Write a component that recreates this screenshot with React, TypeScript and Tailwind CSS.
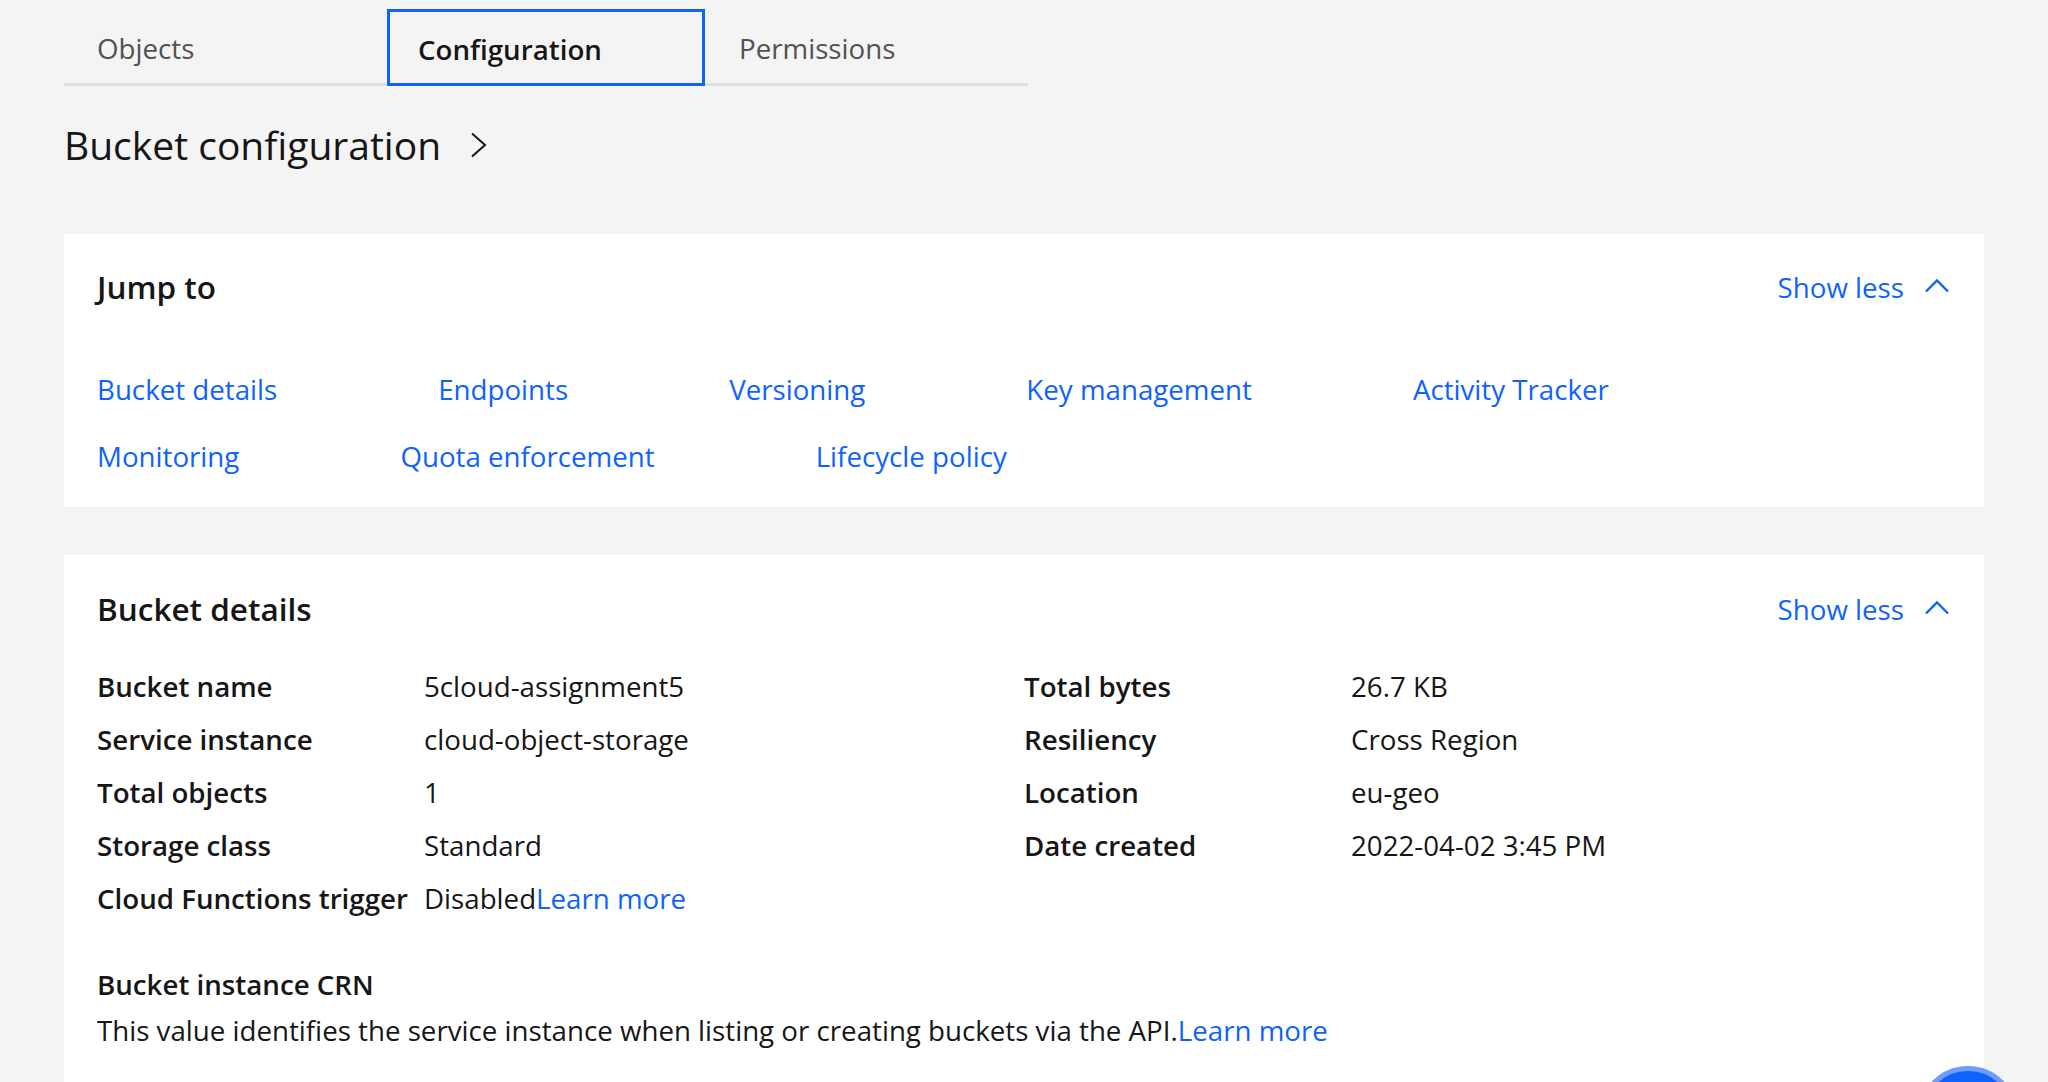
import React from "react";

const ChevronUp = () => (
  <svg width="28" height="28" viewBox="0 0 28 28" fill="none">
    <polyline points="3,19.5 14,8.5 25,19.5" stroke="#0f62fe" strokeWidth="2.4" fill="none" />
  </svg>
);

const ShowLess = () => (
  <div className="flex items-center gap-[19px] text-[27.7px] text-[#0f62fe] leading-[40px]">
    <span className="pt-[2px]">Show less</span>
    <ChevronUp />
  </div>
);

const Row = ({ label, children }: { label: string; children: React.ReactNode }) => (
  <div className="grid grid-cols-[327px_1fr] h-[53px] items-center">
    <div className="font-semibold">{label}</div>
    <div>{children}</div>
  </div>
);

export default function App() {
  return (
    <div className="relative h-[1082px] w-[2048px] overflow-hidden bg-[#f4f4f4] font-['Open_Sans','Noto_Sans',sans-serif] text-[#161616]">
      <div className="px-[64px] pt-[9px]">
        {/* Tabs */}
        <div className="flex w-[964px] text-[27.7px]">
          <div className="flex h-[77px] w-[323px] items-center border-b-[3px] border-[#e0e0e0] pl-[33px] pt-[6px] text-[#525252]">
            Objects
          </div>
          <div className="flex h-[77px] w-[318px] items-center border-[3px] border-[#0f62fe] pl-[28px] pt-[4px] font-semibold text-[#161616]">
            Configuration
          </div>
          <div className="flex h-[77px] w-[323px] items-center border-b-[3px] border-[#e0e0e0] pl-[34px] pt-[6px] text-[#525252]">
            Permissions
          </div>
        </div>

        {/* Heading */}
        <div className="mt-[35px] flex h-[48px] items-center gap-[28px]">
          <h1 className="text-[39px] leading-[48px] font-normal">Bucket configuration</h1>
          <svg width="20" height="30" viewBox="0 0 20 30" fill="none">
            <polyline points="3,3.5 16,15 3,26.5" stroke="#161616" strokeWidth="2" fill="none" />
          </svg>
        </div>

        {/* Jump to card */}
        <div className="mt-[65px] bg-white px-[33px] pt-[32px] pb-[30px]">
          <div className="flex h-[40px] items-center justify-between">
            <h2 className="text-[31.5px] font-semibold leading-[40px] pt-[2px]">Jump to</h2>
            <ShowLess />
          </div>
          <div className="mt-[64px] flex h-[40px] items-center gap-x-[161px] text-[27.7px] text-[#0f62fe]">
            <span>Bucket details</span>
            <span>Endpoints</span>
            <span>Versioning</span>
            <span>Key management</span>
            <span>Activity Tracker</span>
          </div>
          <div className="mt-[27px] flex h-[40px] items-center gap-x-[161px] text-[27.7px] text-[#0f62fe]">
            <span>Monitoring</span>
            <span>Quota enforcement</span>
            <span>Lifecycle policy</span>
          </div>
        </div>

        {/* Bucket details card */}
        <div className="mt-[48px] bg-white px-[33px] pt-[33px] pb-[40px]">
          <div className="flex h-[40px] items-center justify-between">
            <h2 className="text-[31.5px] font-semibold leading-[40px] pt-[2px]">Bucket details</h2>
            <ShowLess />
          </div>
          <div className="mt-[32px] grid grid-cols-2 text-[27.7px]">
            <div>
              <Row label="Bucket name">5cloud-assignment5</Row>
              <Row label="Service instance">cloud-object-storage</Row>
              <Row label="Total objects">1</Row>
              <Row label="Storage class">Standard</Row>
              <Row label="Cloud Functions trigger">
                Disabled<span className="text-[#0f62fe]">Learn more</span>
              </Row>
            </div>
            <div>
              <Row label="Total bytes">26.7 KB</Row>
              <Row label="Resiliency">Cross Region</Row>
              <Row label="Location">eu-geo</Row>
              <Row label="Date created">2022-04-02 3:45 PM</Row>
            </div>
          </div>
          <div className="mt-[40px] h-[38px] text-[27.7px] font-semibold leading-[38px]">Bucket instance CRN</div>
          <div className="mt-[7px] h-[40px] text-[27.7px] leading-[40px]">
            This value identifies the service instance when listing or creating buckets via the API.
            <span className="text-[#0f62fe]">Learn more</span>
          </div>
        </div>
      </div>

      {/* Floating button */}
      <div className="absolute left-[1918px] top-[1066px] h-[100px] w-[100px] rounded-full border-[5px] border-[#6f9cff] bg-[#0f62fe]" />
    </div>
  );
}
